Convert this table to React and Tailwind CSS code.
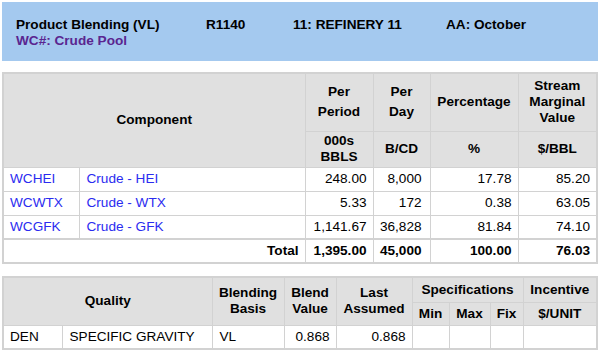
import React from 'react'

const rows = [
  { code: 'WCHEI', name: 'Crude - HEI', period: '248.00', day: '8,000', pct: '17.78', smv: '85.20' },
  { code: 'WCWTX', name: 'Crude - WTX', period: '5.33', day: '172', pct: '0.38', smv: '63.05' },
  { code: 'WCGFK', name: 'Crude - GFK', period: '1,141.67', day: '36,828', pct: '81.84', smv: '74.10' },
]

const th = 'border border-[#d2d2d2] bg-[#e0e0e0] font-bold text-center leading-[16px] p-0'
const td = 'border border-[#d2d2d2] p-0 h-[24px] leading-[16px]'

export default function App() {
  return (
    <div className="w-[600px] h-[353px] bg-white text-[13.6px] text-black overflow-hidden" style={{ fontFamily: '"Liberation Sans", Arial, sans-serif' }}>
      <div className="mx-[2px] mt-[2px] h-[59px] bg-[#a4c9ef] pl-[14px] pt-[15px] font-bold leading-[16px]">
        <div className="flex">
          <span className="w-[190px]">Product Blending (VL)</span>
          <span className="w-[87px]">R1140</span>
          <span className="w-[153px]">11: REFINERY 11</span>
          <span>AA: October</span>
        </div>
        <div className="text-[#5a2590]">WC#: Crude Pool</div>
      </div>

      <table className="mt-[11px] ml-[2px] w-[595px] table-fixed border-collapse border-2 border-[#d2d2d2]">
        <colgroup>
          <col className="w-[76px]" />
          <col className="w-[226px]" />
          <col className="w-[68px]" />
          <col className="w-[57px]" />
          <col className="w-[88px]" />
          <col className="w-[79px]" />
        </colgroup>
        <thead>
          <tr className="h-[58px]">
            <th colSpan={2} rowSpan={2} className={th}>Component</th>
            <th className={th + ' leading-[20px]'}>Per<br />Period</th>
            <th className={th + ' leading-[20px]'}>Per<br />Day</th>
            <th className={th}>Percentage</th>
            <th className={th}>Stream<br />Marginal<br />Value</th>
          </tr>
          <tr className="h-[36px]">
            <th className={th + ' leading-[14px]'}>000s<br />BBLS</th>
            <th className={th}>B/CD</th>
            <th className={th}>%</th>
            <th className={th}>$/BBL</th>
          </tr>
        </thead>
        <tbody>
          {rows.map(r => (
            <tr key={r.code}>
              <td className={td + ' pl-[6px] text-[#2b2bf0]'}>{r.code}</td>
              <td className={td + ' pl-[7px] text-[#2b2bf0]'}>{r.name}</td>
              <td className={td + ' pr-[6px] text-right'}>{r.period}</td>
              <td className={td + ' pr-[8px] text-right'}>{r.day}</td>
              <td className={td + ' pr-[6px] text-right'}>{r.pct}</td>
              <td className={td + ' pr-[6px] text-right'}>{r.smv}</td>
            </tr>
          ))}
          <tr className="font-bold border-t-2 border-[#d2d2d2]">
            <td colSpan={2} className={td + ' pr-[6px] text-right'}>Total</td>
            <td className={td + ' pr-[6px] text-right'}>1,395.00</td>
            <td className={td + ' pr-[8px] text-right'}>45,000</td>
            <td className={td + ' pr-[6px] text-right'}>100.00</td>
            <td className={td + ' pr-[6px] text-right'}>76.03</td>
          </tr>
        </tbody>
      </table>

      <table className="mt-[12px] ml-[2px] w-[595px] table-fixed border-collapse border-2 border-[#d2d2d2]">
        <colgroup>
          <col className="w-[59px]" />
          <col className="w-[150px]" />
          <col className="w-[72px]" />
          <col className="w-[52px]" />
          <col className="w-[76px]" />
          <col className="w-[37px]" />
          <col className="w-[41px]" />
          <col className="w-[33px]" />
          <col className="w-[74px]" />
        </colgroup>
        <thead>
          <tr className="h-[25px]">
            <th colSpan={2} rowSpan={2} className={th}>Quality</th>
            <th rowSpan={2} className={th}>Blending<br />Basis</th>
            <th rowSpan={2} className={th}>Blend<br />Value</th>
            <th rowSpan={2} className={th}>Last<br />Assumed</th>
            <th colSpan={3} className={th}>Specifications</th>
            <th className={th}>Incentive</th>
          </tr>
          <tr className="h-[23px]">
            <th className={th}>Min</th>
            <th className={th}>Max</th>
            <th className={th}>Fix</th>
            <th className={th}>$/UNIT</th>
          </tr>
        </thead>
        <tbody>
          <tr>
            <td className={td + ' h-[23px] pl-[6px]'}>DEN</td>
            <td className={td + ' h-[23px] pl-[7px]'}>SPECIFIC GRAVITY</td>
            <td className={td + ' h-[23px] pl-[7px]'}>VL</td>
            <td className={td + ' h-[23px] pr-[6px] text-right'}>0.868</td>
            <td className={td + ' h-[23px] pr-[6px] text-right'}>0.868</td>
            <td className={td + ' h-[23px]'}></td>
            <td className={td + ' h-[23px]'}></td>
            <td className={td + ' h-[23px]'}></td>
            <td className={td + ' h-[23px]'}></td>
          </tr>
        </tbody>
      </table>
    </div>
  )
}
